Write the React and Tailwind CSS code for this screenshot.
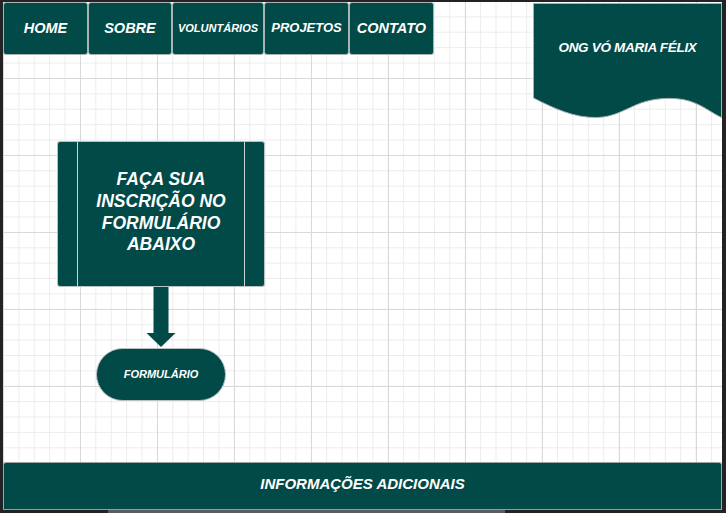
import React from "react";

const font = { fontFamily: '"Liberation Sans", Arial, sans-serif' };

function NavBtn({ children, w, size }) {
  return (
    <div
      className={`h-[53px] ${w} shrink-0 flex items-center justify-center rounded-[3px] border border-[#aab4b3] bg-[#014a48] text-white font-bold italic ${size}`}
    >
      {children}
    </div>
  );
}

export default function App() {
  return (
    <div
      className="w-[726px] h-[513px] bg-[#232323] pt-[2px] pl-[3px] pr-[4px] flex flex-col overflow-hidden"
      style={font}
    >
      <div className="relative flex-1 flex flex-col bg-white bg-[linear-gradient(to_right,#d9d9d9_1px,transparent_1px),linear-gradient(to_bottom,#d9d9d9_1px,transparent_1px),linear-gradient(to_right,#ececec_1px,transparent_1px),linear-gradient(to_bottom,#ececec_1px,transparent_1px)] bg-[size:77px_77px,77px_77px,15.4px_15.4px,15.4px_15.4px] bg-[position:0px_-1px,0px_-1px,0px_-1px,0px_-1px]">
        {/* header */}
        <div className="flex items-start justify-between">
          <div className="flex">
            <NavBtn w="w-[85px]" size="text-[14.5px]">HOME</NavBtn>
            <NavBtn w="w-[84px]" size="text-[14.5px]">SOBRE</NavBtn>
            <NavBtn w="w-[92px]" size="text-[11px]">VOLUNTÁRIOS</NavBtn>
            <NavBtn w="w-[85px]" size="text-[13px] pb-[2px]">PROJETOS</NavBtn>
            <NavBtn w="w-[85px]" size="text-[14.5px]">CONTATO</NavBtn>
          </div>
          <div className="relative w-[189px] h-[116px] mt-px">
            <svg className="absolute inset-0" width="189" height="116" viewBox="0 0 189 116">
              <path
                d="M0.5 0.5 H188.5 V114.5 C178 110 168 100 150 96.5 C137 94.5 122 95 108 100 C92 106 82 114 64 114.5 C42 115 22 106 0.5 95 Z"
                fill="#014a48"
                stroke="#a7b0af"
                strokeWidth="1"
              />
            </svg>
            <div className="relative pt-[35px] text-center text-white font-bold italic text-[13.5px] tracking-[-0.3px]">
              ONG VÓ MARIA FÉLIX
            </div>
          </div>
        </div>

        {/* flow */}
        <div className="flex flex-col items-center w-[208px] ml-[54px] mt-[22px]">
          <div className="w-[208px] h-[146px] rounded-[3px] border border-[#b9c2c1] bg-[#014a48] flex">
            <div className="ml-[19px] mr-[19px] flex-1 border-x border-[#c7d6d4] flex items-center justify-center">
              <div className="text-white font-bold italic text-[17.5px] leading-[21.7px] text-center mb-[3px]">
                FAÇA SUA
                <br />
                INSCRIÇÃO NO
                <br />
                FORMULÁRIO
                <br />
                ABAIXO
              </div>
            </div>
          </div>
          <svg width="30" height="61" viewBox="0 0 30 61" className="block">
            <rect x="7.5" y="0" width="15" height="47" fill="#014a48" />
            <polygon points="0.5,46 29.5,46 15,60" fill="#014a48" />
          </svg>
          <div className="w-[130px] h-[53px] rounded-full border border-[#b9c2c1] bg-[#014a48] flex items-center justify-center text-white font-bold italic text-[11px]">
            FORMULÁRIO
          </div>
        </div>

        {/* footer */}
        <div className="mt-auto h-[47px] rounded-t-[3px] border border-b-0 border-[#9da6a5] bg-[#014a48] flex items-center justify-center">
          <div className="text-white font-bold italic text-[15px] -mt-[4px]">
            INFORMAÇÕES ADICIONAIS
          </div>
        </div>
        <div className="h-px bg-[#6ea9c6]" />
      </div>
      <div className="h-[3px] flex">
        <div className="ml-[105px] w-[397px] h-[3px] bg-[#5a5d60]" />
      </div>
    </div>
  );
}
